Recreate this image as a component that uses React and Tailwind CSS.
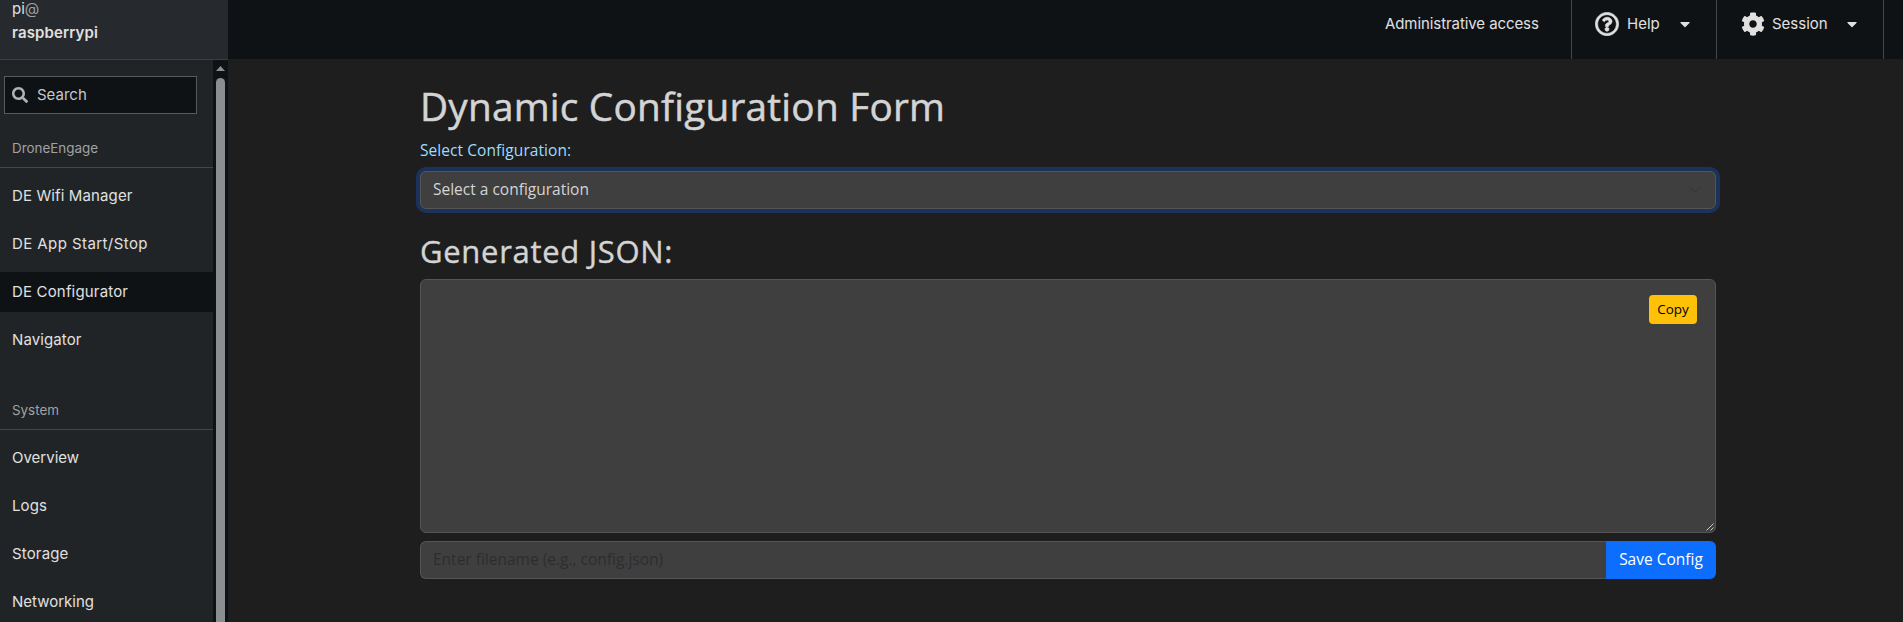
import { FaCaretDown, FaCog, FaRegQuestionCircle, FaSearch } from "react-icons/fa";

const toolItems = [
  { label: "DE Wifi Manager", tracking: "tracking-[0.12px]" },
  { label: "DE App Start/Stop", tracking: "tracking-[0.42px]" },
  { label: "DE Configurator", tracking: "tracking-[0.17px]", active: true },
  { label: "Navigator", tracking: "tracking-[0.1px]" },
];

const systemItems = [
  { label: "Overview", tracking: "tracking-normal" },
  { label: "Logs", tracking: "tracking-[0.1px]" },
  { label: "Storage", tracking: "tracking-[0.15px]" },
  { label: "Networking", tracking: "tracking-normal" },
];

function NavSection({ title, items }) {
  return (
    <section>
      <h2 className="flex h-[39px] items-center border-b border-[#444749] px-3 text-[13.4px] leading-5 text-[#a0a2a3]">
        {title}
      </h2>
      <ul className="mt-2 flex flex-col gap-2">
        {items.map((item) => (
          <li
            key={item.label}
            className={`flex h-10 items-center px-3 text-[15px] ${item.tracking} ${item.active ? "bg-[#0f1214]" : ""}`}
          >
            {item.label}
          </li>
        ))}
      </ul>
    </section>
  );
}

function Sidebar() {
  return (
    <aside className="flex w-[228px] shrink-0 flex-col bg-[#212427] text-[#e0e0e0]">
      <div className="h-[60px] shrink-0 border-b border-[#3c3f42] bg-[#26292d] px-3 text-[15px] leading-6">
        <div className="-mt-[3px]">
          pi<span className="text-[#a0a2a3]">@</span>
        </div>
        <div className="font-semibold tracking-[0.12px]">raspberrypi</div>
      </div>
      <div className="flex min-h-0 flex-1">
        <nav className="flex min-w-0 flex-1 flex-col overflow-hidden">
          <div className="mt-4 ml-1 flex h-[38px] w-[193px] shrink-0 items-center gap-[9px] border border-[#57595b] bg-[#0f1214] pl-[7px] text-[15px]">
            <FaSearch className="size-4 text-[#b0b2b3]" />
            <span className="text-[#c6c7c8]">Search</span>
          </div>
          <div className="mt-[15px] flex shrink-0 flex-col gap-[31px]">
            <NavSection title="DroneEngage" items={toolItems} />
            <NavSection title="System" items={systemItems} />
          </div>
        </nav>
        <div className="flex w-[15px] flex-col items-center bg-[#0f1214]">
          <svg className="mt-[6px] h-[5px] w-[9px] shrink-0" viewBox="0 0 9 5">
            <path d="M4.5 0 9 5H0Z" fill="#8b8e90" />
          </svg>
          <div className="mt-[7px] w-[9px] flex-1 rounded-t-full bg-[#8b8e90]" />
        </div>
      </div>
    </aside>
  );
}

function TopBar() {
  return (
    <header className="flex h-[59px] shrink-0 justify-end bg-[#0f1214] pr-[19px] text-[15px] text-[#e0e0e0]">
      <div className="flex h-12 w-[186px] items-center tracking-[-0.08px]">Administrative access</div>
      <div className="w-[145px] border-l border-[#444749]">
        <div className="flex h-12 items-center pl-[23px]">
          <FaRegQuestionCircle className="size-6 stroke-current stroke-[14px]" />
          <span className="ml-2 w-[49px]">Help</span>
          <FaCaretDown className="ml-px size-4" />
        </div>
      </div>
      <div className="w-[168px] border-x border-[#444749]">
        <div className="flex h-12 items-center pl-6">
          <FaCog className="size-6" />
          <span className="ml-[7px] w-[72px]">Session</span>
          <FaCaretDown className="size-4" />
        </div>
      </div>
    </header>
  );
}

function ConfigForm() {
  return (
    <main className="ml-48 flex w-[1296px] flex-col pt-[23px] font-['Open_Sans',sans-serif] text-[15.5px] leading-6 text-[#d4d4d4]">
      <h1 className="h-12 text-[38.75px] leading-[48px] tracking-[0.22px] [-webkit-text-stroke:0.5px]">
        Dynamic Configuration Form
      </h1>
      <label className="mt-2 h-6 tracking-[0.07px] text-[#9cdcfe]">Select Configuration:</label>
      <div className="mt-[9px] flex h-[38px] items-center justify-between rounded-md border border-[#555] bg-[#3f3f3f] pr-[14px] pl-3 shadow-[0_0_0_4px_#1b335a]">
        <span className="pb-0.5">Select a configuration</span>
        <svg className="size-3" viewBox="0 0 16 16" fill="none" stroke="#343a40" strokeLinecap="round" strokeLinejoin="round" strokeWidth="2">
          <path d="m2 5 6 6 6-6" />
        </svg>
      </div>
      <h2 className="mt-[23px] h-[38px] text-[31px] leading-[38px] tracking-[0.7px] [-webkit-text-stroke:0.4px]">
        Generated JSON:
      </h2>
      <div className="relative mt-[9px] h-[254px] rounded-md border border-[#555] bg-[#3f3f3f]">
        <button className="absolute top-[15px] right-[18px] flex h-[29px] w-12 items-center justify-center rounded bg-[#ffc107] pb-0.5 text-[13.5px] text-black">
          Copy
        </button>
        <svg className="absolute right-px bottom-px size-2" viewBox="0 0 8 8" fill="none" stroke="#c8c8c8">
          <path d="M0.5 7.5 7.5 0.5M4.5 7.5l3-3" />
        </svg>
      </div>
      <div className="mt-2 flex h-[38px]">
        <div className="flex flex-1 items-center rounded-l-md border border-r-0 border-[#555] bg-[#3f3f3f] px-3 pb-0.5 text-[#2b2e31]">
          Enter filename (e.g., config.json)
        </div>
        <button className="flex w-[110px] items-center justify-center rounded-r-md bg-[#0d6efd] pb-0.5 text-white">
          Save Config
        </button>
      </div>
    </main>
  );
}

export default function App() {
  return (
    <div className="flex h-[622px] overflow-hidden bg-[#1e1e1e] font-[Inter,sans-serif]">
      <Sidebar />
      <div className="flex min-w-0 flex-1 flex-col">
        <TopBar />
        <ConfigForm />
      </div>
    </div>
  );
}
